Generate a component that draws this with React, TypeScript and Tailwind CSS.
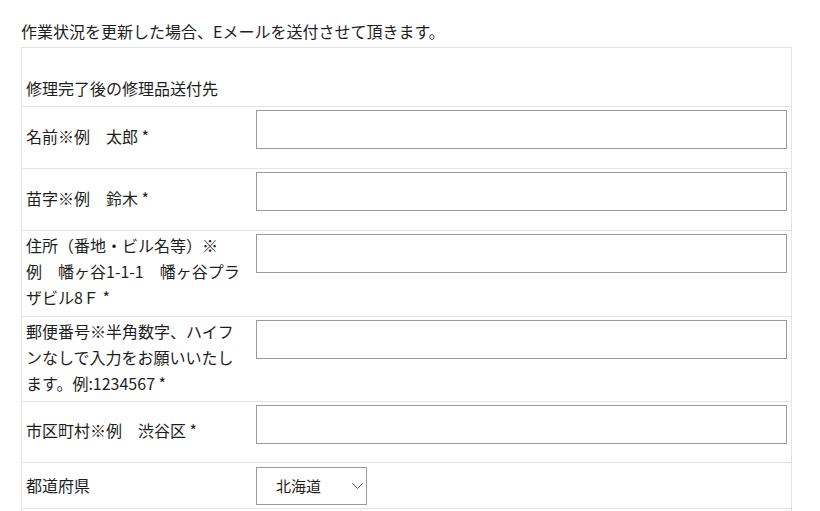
import React from "react";

const font = {
  fontFamily: '"Noto Sans CJK JP", "Noto Sans", sans-serif',
};

function InputRow({
  label,
  tall,
  h = "h-[61px]",
  pb = "pb-[4px]",
}: {
  label: React.ReactNode;
  tall?: boolean;
  h?: string;
  pb?: string;
}) {
  return (
    <div className="grid grid-cols-[234px_1fr] border-t border-[#e3e3e3]">
      <div
        className={
          tall
            ? "pl-[4px] pr-[12px] pt-[1px] leading-[26px] " + pb
            : "pl-[4px] pr-[12px] pb-[4px] flex items-center leading-[26px] " + h
        }
      >
        <div>{label}</div>
      </div>
      <div className="pt-[3px] pr-[4px]">
        <input
          type="text"
          className="block w-full h-[39px] border border-[#9a9a9a] bg-white outline-none"
        />
      </div>
    </div>
  );
}

export default function App() {
  return (
    <div
      className="w-[820px] h-[511px] overflow-hidden bg-white text-[16px] text-[#1e1e1e]"
      style={font}
    >
      <p className="pl-[21px] pt-[18px] pb-[2px] leading-[26px]">
        作業状況を更新した場合、Eメールを送付させて頂きます。
      </p>
      <div className="ml-[21px] mt-[1px] w-[771px] border border-[#e3e3e3]">
        <div className="h-[58px] flex items-end pl-[4px] pb-[5px] leading-[26px]">
          修理完了後の修理品送付先
        </div>
        <InputRow label="名前※例　太郎 *" />
        <InputRow label="苗字※例　鈴木 *" />
        <InputRow
          tall
          pb="pb-[6px]"
          label={
            <>
              住所（番地・ビル名等）※
              <br />
              例　幡ヶ谷1-1-1　幡ヶ谷プラザビル8Ｆ *
            </>
          }
        />
        <InputRow
          tall
          pb="pb-[5px]"
          label="郵便番号※半角数字、ハイフンなしで入力をお願いいたします。例:1234567 *"
        />
        <InputRow label="市区町村※例　渋谷区 *" h="h-[60px]" />
        <div className="grid grid-cols-[234px_1fr] border-t border-[#e3e3e3]">
          <div className="pl-[4px] pr-[12px] pb-[2px] flex items-center leading-[26px]">
            都道府県
          </div>
          <div className="pt-[4px] pb-[3px]">
            <div className="relative w-[111px] h-[38px]">
              <select
                className="appearance-none w-full h-full border border-[#9a9a9a] bg-white pl-[19px] text-[15px] text-[#1e1e1e] outline-none"
                style={font}
                defaultValue="北海道"
              >
                <option>北海道</option>
                <option>青森県</option>
                <option>東京都</option>
              </select>
              <svg
                className="pointer-events-none absolute right-[4px] top-[16px]"
                width="11"
                height="6"
                viewBox="0 0 11 6"
                fill="none"
              >
                <path d="M0.5 0.5 L5.5 5.5 L10.5 0.5" stroke="#555" strokeWidth="1" />
              </svg>
            </div>
          </div>
        </div>
        <div className="grid grid-cols-[234px_1fr] border-t border-[#e3e3e3] h-[60px]">
          <div />
          <div />
        </div>
      </div>
    </div>
  );
}
